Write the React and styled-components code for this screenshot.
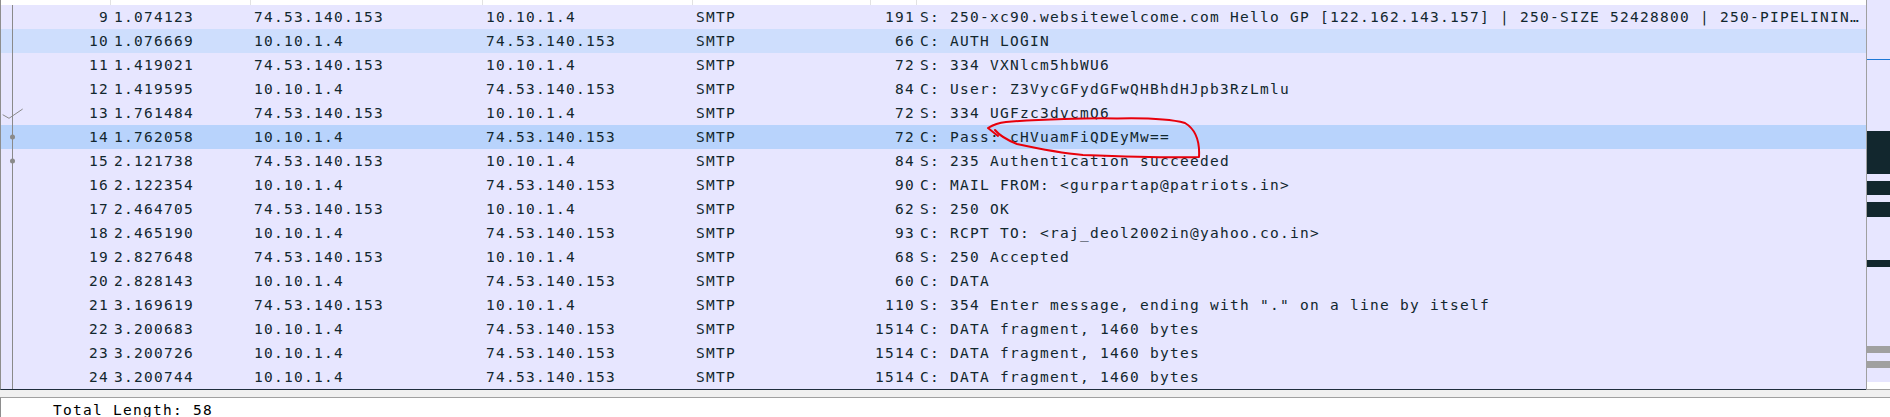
import React from "react";
import styled, { createGlobalStyle } from "styled-components";

const GlobalStyle = createGlobalStyle`
  html, body {
    margin: 0;
    padding: 0;
    background: #fff;
    overflow: hidden;
  }
  body {
    font-family: "DejaVu Sans Mono", "Liberation Mono", monospace;
  }
`;

const COLS = "110px 140px 232px 210px 178px 46px 1fr";

const rows = [
  ["9", "1.074123", "74.53.140.153", "10.10.1.4", "SMTP", "191", "S: 250-xc90.websitewelcome.com Hello GP [122.162.143.157] | 250-SIZE 52428800 | 250-PIPELINING | 250-AUTH PLAIN LOGIN | 250-STARTTLS | 250 HELP"],
  ["10", "1.076669", "10.10.1.4", "74.53.140.153", "SMTP", "66", "C: AUTH LOGIN", "hover"],
  ["11", "1.419021", "74.53.140.153", "10.10.1.4", "SMTP", "72", "S: 334 VXNlcm5hbWU6"],
  ["12", "1.419595", "10.10.1.4", "74.53.140.153", "SMTP", "84", "C: User: Z3VycGFydGFwQHBhdHJpb3RzLmlu"],
  ["13", "1.761484", "74.53.140.153", "10.10.1.4", "SMTP", "72", "S: 334 UGFzc3dvcmQ6"],
  ["14", "1.762058", "10.10.1.4", "74.53.140.153", "SMTP", "72", "C: Pass: cHVuamFiQDEyMw==", "selected"],
  ["15", "2.121738", "74.53.140.153", "10.10.1.4", "SMTP", "84", "S: 235 Authentication succeeded"],
  ["16", "2.122354", "10.10.1.4", "74.53.140.153", "SMTP", "90", "C: MAIL FROM: <gurpartap@patriots.in>"],
  ["17", "2.464705", "74.53.140.153", "10.10.1.4", "SMTP", "62", "S: 250 OK"],
  ["18", "2.465190", "10.10.1.4", "74.53.140.153", "SMTP", "93", "C: RCPT TO: <raj_deol2002in@yahoo.co.in>"],
  ["19", "2.827648", "74.53.140.153", "10.10.1.4", "SMTP", "68", "S: 250 Accepted"],
  ["20", "2.828143", "10.10.1.4", "74.53.140.153", "SMTP", "60", "C: DATA"],
  ["21", "3.169619", "74.53.140.153", "10.10.1.4", "SMTP", "110", 'S: 354 Enter message, ending with "." on a line by itself'],
  ["22", "3.200683", "10.10.1.4", "74.53.140.153", "SMTP", "1514", "C: DATA fragment, 1460 bytes"],
  ["23", "3.200726", "10.10.1.4", "74.53.140.153", "SMTP", "1514", "C: DATA fragment, 1460 bytes"],
  ["24", "3.200744", "10.10.1.4", "74.53.140.153", "SMTP", "1514", "C: DATA fragment, 1460 bytes"],
];

const Window = styled.div`
  width: 1890px;
  height: 417px;
  display: flex;
  flex-direction: column;
  overflow: hidden;
`;

const PacketPane = styled.div`
  display: flex;
  height: 390px;
  flex: none;
`;

const List = styled.div`
  position: relative;
  flex: 1;
  border-left: 1px solid #8e8e8e;
  border-bottom: 1px solid #1f2d3d;
  background: #fff;
`;

const HeaderStrip = styled.div`
  display: grid;
  grid-template-columns: ${COLS};
  height: 5px;
  background: #fff;
`;

const HeaderCell = styled.div`
  border-right: 1px solid #e2e2e2;
  &:last-child {
    border-right: none;
  }
`;

const Row = styled.div`
  display: grid;
  grid-template-columns: ${COLS};
  height: 24px;
  line-height: 24px;
  font-size: 14.5px;
  letter-spacing: 1.27px;
  color: #12272e;
  background: ${(p) =>
    p.$state === "selected" ? "#b8d3fc" : p.$state === "hover" ? "#cedefd" : "#e7e6ff"};
`;

const Cell = styled.div`
  white-space: pre;
  overflow: hidden;
  text-overflow: ellipsis;
  padding: ${(p) => (p.$right ? "0 2px 0 3px" : "0 3px")};
  text-align: ${(p) => (p.$right ? "right" : "left")};
`;

const Overlay = styled.svg`
  position: absolute;
  top: 0;
  left: -1px;
  pointer-events: none;
`;

const Minimap = styled.div`
  width: 23px;
  flex: none;
  border-left: 1px solid #a0a0a0;
  border-bottom: 1px solid #a0a0a0;
  background: #e7e6ff;
  svg {
    display: block;
  }
`;

const Splitter = styled.div`
  height: 7px;
  flex: none;
  background: #f0f0f0;
`;

const DetailPane = styled.div`
  flex: 1;
  background: #fff;
  border-top: 1px solid #a0a0a0;
  border-left: 1px solid #8e8e8e;
  padding-left: 52px;
  font-size: 14.5px;
  letter-spacing: 1.27px;
  line-height: 24px;
  color: #000;
  white-space: pre;
`;

function PacketRow({ r }) {
  return (
    <Row $state={r[7]}>
      <Cell $right>{r[0]}</Cell>
      <Cell>{r[1]}</Cell>
      <Cell>{r[2]}</Cell>
      <Cell>{r[3]}</Cell>
      <Cell>{r[4]}</Cell>
      <Cell $right>{r[5]}</Cell>
      <Cell>{r[6]}</Cell>
    </Row>
  );
}

function Annotations() {
  return (
    <Overlay width="1866" height="390" viewBox="0 0 1866 390">
      <line x1="12.5" y1="5" x2="12.5" y2="389" stroke="#8a8a8a" strokeWidth="1" />
      <polyline points="2.7,114.7 9,118.3 22.7,109" fill="none" stroke="#8a8a8a" strokeWidth="1" />
      <circle cx="12.5" cy="137" r="2.5" fill="#8a8a8a" />
      <circle cx="12.5" cy="161" r="2.5" fill="#8a8a8a" />
      <path
        d="M 998 136 L 988 128 Q 996 123 1006 122 C 1040 119 1090 118 1117 118.5 C 1140 118 1170 119 1185 123 C 1195 129 1200 140 1199 157 C 1170 158 1110 156 1083 155 C 1060 153 1040 149 1017 144 C 1007 140 1000 136 995 130"
        fill="none"
        stroke="#e8000b"
        strokeWidth="2"
        strokeLinecap="round"
        strokeLinejoin="round"
      />
    </Overlay>
  );
}

function MinimapDrawing() {
  const blocks = [
    [59, 1, "#1e78d6"],
    [131, 43, "#12272e"],
    [181, 14, "#12272e"],
    [202, 15, "#12272e"],
    [260, 7, "#12272e"],
    [346, 7, "#a0a0a0"],
    [361, 7, "#a0a0a0"],
    [382, 7, "#ffffff"],
  ];
  return (
    <svg width="23" height="389" viewBox="0 0 23 389">
      {blocks.map(([y, h, c], i) => (
        <rect key={i} x="0" y={y} width="23" height={h} fill={c} />
      ))}
    </svg>
  );
}

export default function App() {
  return (
    <>
      <GlobalStyle />
      <Window>
        <PacketPane>
          <List>
            <HeaderStrip>
              {Array.from({ length: 7 }).map((_, i) => (
                <HeaderCell key={i} />
              ))}
            </HeaderStrip>
            {rows.map((r) => (
              <PacketRow key={r[0]} r={r} />
            ))}
            <Annotations />
          </List>
          <Minimap>
            <MinimapDrawing />
          </Minimap>
        </PacketPane>
        <Splitter />
        <DetailPane>Total Length: 58</DetailPane>
      </Window>
    </>
  );
}
